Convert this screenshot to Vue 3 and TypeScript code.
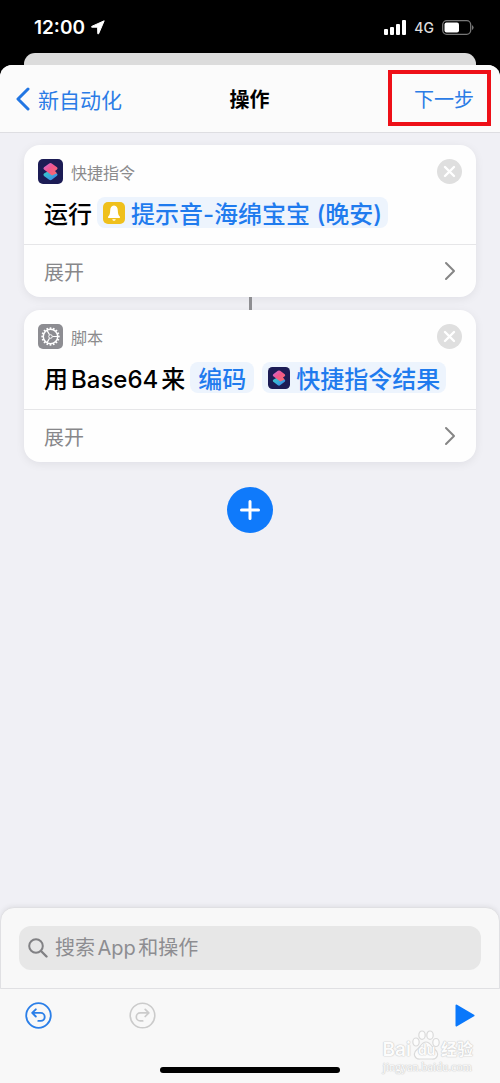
<script setup lang="ts">
import { ref } from 'vue'

interface Part {
  kind: 'text' | 'chip'
  label: string
  icon?: 'bell' | 'shortcuts'
}

interface Action {
  id: number
  app: string
  icon: 'shortcuts' | 'gear'
  parts: Part[]
}

const actions = ref<Action[]>([
  {
    id: 1,
    app: '快捷指令',
    icon: 'shortcuts',
    parts: [
      { kind: 'text', label: '运行' },
      { kind: 'chip', label: '提示音-海绵宝宝 (晚安)', icon: 'bell' },
    ],
  },
  {
    id: 2,
    app: '脚本',
    icon: 'gear',
    parts: [
      { kind: 'text', label: '用Base64来' },
      { kind: 'chip', label: '编码' },
      { kind: 'chip', label: '快捷指令结果', icon: 'shortcuts' },
    ],
  },
])

const query = ref('')
const teeth = Array.from({ length: 16 }, (_, i) => i * 22.5)

function remove(id: number) {
  actions.value = actions.value.filter((a) => a.id !== id)
}
</script>

<template>
  <div class="screen">
    <svg class="defs" aria-hidden="true">
      <defs>
        <linearGradient id="sc-top" x1="0" y1="0" x2="1" y2="1">
          <stop offset="0" stop-color="#c86fe0" />
          <stop offset="0.45" stop-color="#f0568c" />
          <stop offset="1" stop-color="#f4726a" />
        </linearGradient>
        <linearGradient id="sc-bottom" x1="0" y1="0" x2="1" y2="1">
          <stop offset="0" stop-color="#3ed0c0" />
          <stop offset="0.55" stop-color="#38a8dc" />
          <stop offset="1" stop-color="#3f78e4" />
        </linearGradient>
        <symbol id="i-shortcuts" viewBox="0 0 25 25">
          <rect width="25" height="25" rx="5" fill="#1c1c55" />
          <path d="M6 14.4 11.4 11.4Q12.5 10.8 13.6 11.4L19 14.4Q20.2 15.5 19 16.7L13.8 20.8Q12.5 21.7 11.2 20.8L6 16.9Q4.8 15.5 6 14.4Z" fill="url(#sc-bottom)" />
          <path d="M6 8.2 11.2 4.4Q12.5 3.5 13.800 4.4L19 8.2Q20.2 9.3 19 10.4L17 12 19 14.3 14 16.600 6 10.600Q4.8 9.3 6 8.2Z" fill="url(#sc-top)" />
        </symbol>
      </defs>
    </svg>

    <header class="status">
      <div class="clock">
        <span>12:00</span>
        <svg width="14" height="15" viewBox="0 0 14 15" aria-hidden="true">
          <path d="M13.2.8.7 6.4V7.200H6.600L6.800 13.800H7.600Z" fill="#fff" stroke="#fff" stroke-linejoin="round" />
        </svg>
      </div>
      <div class="signals">
        <svg width="22" height="15" viewBox="0 0 22 15" aria-hidden="true">
          <g fill="#fff">
            <rect x="0" y="9" width="4" height="6" rx="1" />
            <rect x="6" y="7" width="4" height="8" rx="1" />
            <rect x="12" y="4" width="4" height="11" rx="1" />
            <rect x="18" y="0" width="4" height="15" rx="1" />
          </g>
        </svg>
        <span class="network">4G</span>
        <svg width="32" height="15" viewBox="0 0 32 15" aria-hidden="true">
          <rect x=".7" y=".7" width="28" height="13.600" rx="4" fill="none" stroke="#777" stroke-width="1.300" />
          <rect x="2.500" y="2.500" width="14.500" height="10" rx="2" fill="#fff" />
          <path d="M30 5q1.600 1 1.600 2.500T30 10z" fill="#777" />
        </svg>
      </div>
    </header>

    <div class="behind"></div>

    <main class="sheet">
      <nav class="bar">
        <button type="button" class="back">
          <svg width="15" height="24" viewBox="0 0 15 24" aria-hidden="true">
            <path d="M13 2 3 12 13 22" fill="none" stroke="#2276e3" stroke-width="3" stroke-linecap="round" stroke-linejoin="round" />
          </svg>
          <span>新自动化</span>
        </button>
        <h1>操作</h1>
        <button type="button" class="next">下一步</button>
      </nav>

      <section class="flow">
        <article v-for="action in actions" :key="action.id" class="card">
          <div class="head">
            <svg v-if="action.icon === 'shortcuts'" class="app-icon" aria-hidden="true"><use href="#i-shortcuts" /></svg>
            <svg v-else class="app-icon" viewBox="0 0 25 25" aria-hidden="true">
              <rect width="25" height="25" rx="5" fill="#8d8d92" />
              <g fill="none" stroke="#fff">
                <circle cx="12.500" cy="12.500" r="7.200" stroke-width="1.400" />
                <path v-for="t in teeth" :key="t" d="M12.500 3.300V5.300" stroke-width="1.700" :transform="`rotate(${t} 12.500 12.500)`" />
                <circle cx="12.500" cy="12.500" r="1.800" stroke-width="1" />
                <path d="M14.500 12.500H19.500M11.500 10.800 9 6.400M11.500 14.200 9 18.600" stroke-width="1.200" />
              </g>
            </svg>
            <span class="app-name">{{ action.app }}</span>
            <button type="button" class="close" :aria-label="`移除${action.app}`" @click="remove(action.id)">
              <svg width="25" height="25" viewBox="0 0 25 25" aria-hidden="true">
                <circle cx="12.500" cy="12.500" r="12.500" fill="#dfdfdf" />
                <path d="M8 8 17 17M17 8 8 17" stroke="#fff" stroke-width="2.400" stroke-linecap="round" />
              </svg>
            </button>
          </div>
          <div class="phrase">
            <template v-for="part in action.parts" :key="part.label">
              <span v-if="part.kind === 'text'" class="word">{{ part.label }}</span>
              <button v-else type="button" class="chip" :class="{ 'with-icon': part.icon }">
                <svg v-if="part.icon === 'bell'" class="chip-icon" viewBox="0 0 22 22" aria-hidden="true">
                  <rect width="22" height="22" rx="5" fill="#efc01c" />
                  <path d="M11 3.400C8.400 3.600 7.300 5.600 7.200 8.200 7.100 11.600 6.600 13.200 5.200 14.500Q4.400 15.700 5.600 15.900H16.400Q17.600 15.700 16.800 14.500C15.400 13.200 14.900 11.600 14.800 8.200 14.700 5.600 13.600 3.600 11 3.400Z" fill="#fff" />
                  <path d="M9.200 17.200H12.800Q12.300 18.700 11 18.700T9.200 17.200Z" fill="#fff" />
                </svg>
                <svg v-else-if="part.icon === 'shortcuts'" class="chip-icon" aria-hidden="true"><use href="#i-shortcuts" /></svg>
                <span>{{ part.label }}</span>
              </button>
            </template>
          </div>
          <button type="button" class="expand">
            <span>展开</span>
            <svg width="12" height="20" viewBox="0 0 12 20" aria-hidden="true">
              <path d="M2 2 10 10 2 18" fill="none" stroke="#858585" stroke-width="2" stroke-linecap="round" stroke-linejoin="round" />
            </svg>
          </button>
        </article>

        <button type="button" class="add" aria-label="添加操作">
          <svg width="20" height="20" viewBox="0 0 20 20" aria-hidden="true">
            <path d="M10 1.500V18.500M1.500 10H18.500" stroke="#fff" stroke-width="3" stroke-linecap="round" />
          </svg>
        </button>
      </section>

      <section class="drawer">
        <label class="search">
          <svg width="20" height="20" viewBox="0 0 20 20" aria-hidden="true">
            <circle cx="8" cy="8" r="6.800" fill="none" stroke="#818184" stroke-width="2" />
            <path d="M13 13 18.500 18.500" stroke="#818184" stroke-width="2.400" stroke-linecap="round" />
          </svg>
          <input v-model="query" type="text" placeholder="搜索App和操作" aria-label="搜索App和操作" />
        </label>
      </section>

      <footer class="tools">
        <div class="tool-row">
          <button type="button" class="undo" aria-label="撤销">
            <svg width="27" height="27" viewBox="0 0 27 27" fill="none" stroke="currentColor" stroke-linecap="round" stroke-linejoin="round" aria-hidden="true">
              <circle cx="13.500" cy="13.500" r="12.300" stroke-width="1.800" />
              <path d="M10.800 7.300 7.200 10.900 10.800 14.500M7.500 10.900H15.700A4 4 0 0 1 15.700 18.900H13.300" stroke-width="1.900" />
            </svg>
          </button>
          <button type="button" class="redo" aria-label="重做" disabled>
            <svg width="27" height="27" viewBox="0 0 27 27" fill="none" stroke="currentColor" stroke-linecap="round" stroke-linejoin="round" aria-hidden="true">
              <circle cx="13.500" cy="13.500" r="12.300" stroke-width="1.600" />
              <path d="M16.200 7.300 19.800 10.900 16.200 14.500M19.500 10.900H11.300A4 4 0 0 0 11.300 18.900H13.700" stroke-width="1.700" />
            </svg>
          </button>
          <button type="button" class="play" aria-label="运行">
            <svg width="20" height="23" viewBox="0 0 20 23" aria-hidden="true">
              <path d="M1.500 1.500 18.500 11.500 1.500 21.500Z" fill="#0a78fb" stroke="#0a78fb" stroke-width="2" stroke-linejoin="round" />
            </svg>
          </button>
        </div>
        <div class="home"></div>
        <div class="mark">
          <div class="mark-top">
            <span class="mark-bai">Bai</span>
            <span class="mark-paw">
              <svg width="28" height="30" viewBox="0 0 28 30" fill="#fcfcfc" stroke="#dadada" stroke-width="1.200" aria-hidden="true">
                <ellipse cx="4" cy="12" rx="3.200" ry="4" />
                <ellipse cx="10" cy="5.200" rx="3.200" ry="4.200" />
                <ellipse cx="18" cy="5.200" rx="3.200" ry="4.200" />
                <ellipse cx="24" cy="12.500" rx="3.200" ry="4" />
                <path d="M14 12C9.500 12 8.500 17 5 19.500 0 23.500 3 29.500 8 29H20C25 29.500 28 23.500 23 19.500 19.500 17 18.500 12 14 12Z" />
              </svg>
              <span class="mark-du">du</span>
            </span>
            <span class="mark-cn">经验</span>
          </div>
          <span class="mark-url">jingyan.baidu.com</span>
        </div>
      </footer>
    </main>
  </div>
</template>

<style>
body {
  margin: 0;
  background: #000;
}
</style>

<style scoped>
.screen {
  min-height: 100vh;
  display: flex;
  flex-direction: column;
  background: #000;
  color: #000;
  font-family: Inter, "Noto Sans CJK SC", sans-serif;
  font-size: 20px;
  line-height: normal;
  text-autospace: normal;
}
.defs {
  position: absolute;
  width: 0;
  height: 0;
}
button {
  padding: 0;
  border: 0;
  background: none;
  color: inherit;
  font: inherit;
  cursor: pointer;
}
svg {
  display: block;
  flex: none;
}
.status {
  display: flex;
  align-items: center;
  justify-content: space-between;
  height: 53px;
  padding: 1px 26px 0 34px;
  box-sizing: border-box;
  color: #fff;
  line-height: 1;
}
.clock,
.signals {
  display: flex;
  align-items: center;
}
.clock {
  gap: 6px;
  font-weight: 600;
  font-size: 19px;
}
.signals {
  gap: 8px;
}
.network {
  padding-top: 2px;
  font-size: 14px;
  font-weight: 500;
  color: #ddd;
}
.behind {
  height: 12px;
  margin: 0 24px;
  border-radius: 11px 11px 0 0;
  background: #dcdcdc;
}
.sheet {
  flex: 1;
  display: flex;
  flex-direction: column;
  border-radius: 12px 12px 0 0;
  background: #f0f0f5;
}
.bar {
  display: grid;
  grid-template-columns: 1fr auto 1fr;
  align-items: center;
  height: 68px;
  padding: 0 26px 0 15px;
  border-bottom: 1px solid #dedee2;
  border-radius: 12px 12px 0 0;
  box-sizing: border-box;
  background: #fbfbfb;
}
.back {
  justify-self: start;
  display: flex;
  align-items: center;
  gap: 8px;
  color: #2b7ce6;
  font-size: 21px;
}
.bar h1 {
  margin: 0 0 0 10px;
  font-size: 20px;
  font-weight: 600;
}
.next {
  position: relative;
  justify-self: end;
  color: #2b7ce6;
}
.next::after {
  content: "";
  position: absolute;
  inset: -14px -17px -13px -26px;
  border: 4px solid #ee1018;
}
.flow {
  flex: 1;
  display: flex;
  flex-direction: column;
  padding: 12px 24px 24px;
}
.card {
  position: relative;
  border-radius: 16px;
  background: #fefefe;
  box-shadow: 0 2px 10px rgba(0, 0, 30, 0.07);
}
.card + .card {
  margin-top: 13px;
}
.card + .card::before {
  content: "";
  position: absolute;
  left: 50%;
  bottom: 100%;
  width: 3px;
  height: 13px;
  margin-left: -1px;
  background: #8e8e92;
}
.head {
  display: flex;
  align-items: center;
  gap: 8px;
  height: 25px;
  padding: 14px 14px 0;
}
.app-icon {
  width: 25px;
  height: 25px;
}
.app-name {
  flex: 1;
  color: #8b8b8d;
  font-size: 16px;
}
.phrase {
  display: flex;
  align-items: center;
  height: 31px;
  padding: 13px 20px 16px;
  font-size: 24px;
  font-weight: 500;
  white-space: nowrap;
}
.word {
  margin-right: 5px;
}
.chip {
  display: flex;
  align-items: center;
  height: 31px;
  padding: 0 8px;
  border-radius: 8px;
  background: #edf4fd;
  color: #1f7bee;
}
.chip + .chip {
  margin-left: 8px;
}
.chip.with-icon {
  gap: 6px;
  padding: 0 6px;
}
.chip-icon {
  width: 22px;
  height: 22px;
}
.expand {
  display: flex;
  align-items: center;
  justify-content: space-between;
  width: 100%;
  height: 53px;
  padding: 0 20px;
  border-top: 1px solid #e6e6e8;
  color: #87878a;
}
.add {
  align-self: center;
  display: grid;
  place-items: center;
  width: 46px;
  height: 46px;
  margin-top: 25px;
  border-radius: 50%;
  background: #0f7afb;
}
.drawer {
  padding: 18px 18px;
  border: 1px solid #e0e0e3;
  border-radius: 14px 14px 0 0;
  background: #f8f8f8;
  box-shadow: 0 -1px 5px rgba(0, 0, 0, 0.07);
}
.search {
  display: flex;
  align-items: center;
  gap: 7px;
  height: 44px;
  padding: 0 9px;
  border-radius: 12px;
  background: #e7e7e7;
}
.search input {
  flex: 1;
  min-width: 0;
  padding: 0;
  border: 0;
  outline: 0;
  background: none;
  color: #000;
  font: inherit;
}
.search input::placeholder {
  color: #8d8d91;
  opacity: 1;
}
.tools {
  position: relative;
  background: #f8f8f8;
}
.tool-row {
  display: flex;
  align-items: center;
  height: 53px;
  padding: 0 25px;
}
.undo {
  color: #2b7fe8;
}
.redo {
  margin-left: 77px;
  color: #cbcbcb;
}
.play {
  margin-left: auto;
}
.home {
  width: 36%;
  height: 6px;
  margin: 25px auto 10px;
  border-radius: 3px;
  background: #000;
}
.mark {
  position: absolute;
  right: 27px;
  bottom: 10px;
  color: #fcfcfc;
  line-height: 1;
  text-shadow: 0 0 1px #c8c8c8, 0 0 1px #c8c8c8, 0 0 2px #ddd;
  pointer-events: none;
}
.mark-top {
  display: flex;
  align-items: flex-end;
  gap: 1px;
}
.mark-bai {
  padding-bottom: 1px;
  font-size: 19px;
  font-weight: 600;
}
.mark-paw {
  position: relative;
}
.mark-du {
  position: absolute;
  left: 6px;
  bottom: 3px;
  font-size: 14px;
  font-weight: 600;
}
.mark-cn {
  padding-bottom: 3px;
  font-size: 16px;
  font-weight: 600;
}
.mark-url {
  display: block;
  padding-top: 1px;
  font-family: "Liberation Serif", serif;
  font-size: 12px;
}
</style>
